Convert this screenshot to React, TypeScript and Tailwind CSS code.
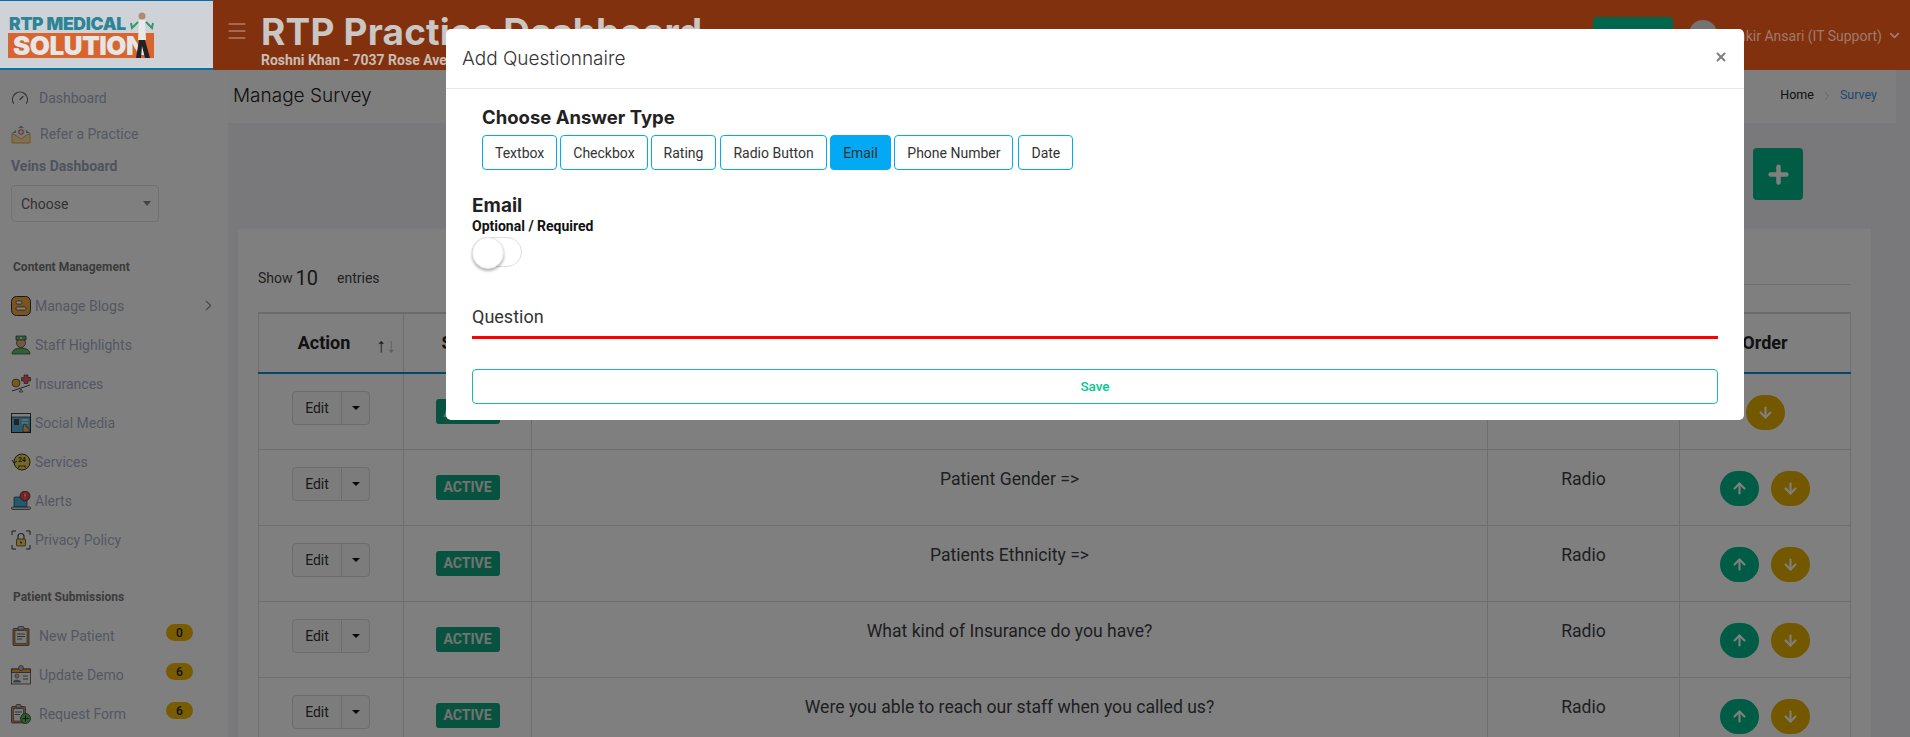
import { ArrowDown, ArrowUp, ChevronDown, ChevronRight, Gauge, Menu, Plus, X } from "lucide-react";
import type { ReactNode } from "react";

const answerTypes = [
  { label: "Textbox", className: "px-[12px] bg-white" },
  { label: "Checkbox", className: "px-[12px] bg-white" },
  { label: "Rating", className: "px-[12px] bg-white" },
  { label: "Radio Button", className: "ml-[1px] px-[12px] bg-white" },
  { label: "Email", className: "px-[12.5px] bg-[#03a9f4]" },
  { label: "Phone Number", className: "px-[12px] bg-white" },
  { label: "Date", className: "ml-[2px] px-[12px] bg-white" },
];

const rows = [
  { question: "Patient Name =>", type: "Text", first: true },
  { question: "Patient Gender =>", type: "Radio" },
  { question: "Patients Ethnicity =>", type: "Radio" },
  { question: "What kind of Insurance do you have?", type: "Radio" },
  { question: "Were you able to reach our staff when you called us?", type: "Radio" },
];

/* small colour icons of the sidebar */
function Svg({ children }: { children: ReactNode }) {
  return (
    <svg viewBox="0 0 20 20" className="w-5 h-5 flex-shrink-0">
      {children}
    </svg>
  );
}

const BlogIcon = () => (
  <Svg>
    <rect x="0.5" y="0.5" width="19" height="19" rx="5" fill="#f0a83c" stroke="#333" />
    <rect x="5" y="5" width="6" height="3" rx="1.5" fill="#fff" stroke="#333" strokeWidth="0.7" />
    <rect x="5" y="11" width="10" height="3" rx="1.5" fill="#fff" stroke="#333" strokeWidth="0.7" />
  </Svg>
);
const StaffIcon = () => (
  <Svg>
    <path d="M1 19c0-4 4-6 9-6s9 2 9 6z" fill="#5cc46a" stroke="#333" strokeWidth="0.7" />
    <circle cx="10" cy="8" r="4.5" fill="#eeb07c" stroke="#333" strokeWidth="0.7" />
    <path d="M5 5V1h10v4z" fill="#5cc46a" stroke="#333" strokeWidth="0.7" />
    <path d="M9 3h2M10 2v2" stroke="#fff" strokeWidth="0.8" />
  </Svg>
);
const InsuranceIcon = () => (
  <Svg>
    <circle cx="5" cy="9" r="4" fill="#e8b93c" stroke="#333" strokeWidth="0.7" />
    <path d="M13 1h4v2.500h2.500v3.500H17v2.500h-4V7h-2.500V3.500H13z" fill="#ee5a5a" stroke="#333" strokeWidth="0.6" />
    <path d="M1 17L19 11" stroke="#333" strokeWidth="0.9" />
    <path d="M8 18l2-3 2 3z" fill="#ddd" stroke="#333" strokeWidth="0.6" />
  </Svg>
);
const SocialIcon = () => (
  <Svg>
    <rect x="0.500" y="0.500" width="19" height="19" fill="#5ab8d8" stroke="#222" />
    <rect x="0.500" y="0.500" width="19" height="3.500" fill="#fff" stroke="#222" strokeWidth="0.7" />
    <rect x="3" y="6" width="5" height="6" fill="#445" />
    <path d="M11 7h6M11 10h6" stroke="#fff" strokeWidth="1" />
    <path d="M12 19v-4l1-4 2 .5v2.500l3 1V19z" fill="#f0b070" stroke="#333" strokeWidth="0.6" />
  </Svg>
);
const ServiceIcon = () => (
  <Svg>
    <circle cx="11" cy="10" r="8" fill="#ecd04a" stroke="#333" />
    <path d="M1 8l2 3 3-2" fill="none" stroke="#333" />
    <path d="M7 14l8 0M7 16l2-2M15 16l-2-2" stroke="#333" strokeWidth="0.8" />
    <text x="11" y="10" fontSize="6.500" fontWeight="700" textAnchor="middle" fontFamily="Roboto, sans-serif" fill="#333">24</text>
  </Svg>
);
const AlertIcon = () => (
  <Svg>
    <rect x="3" y="6" width="13" height="10" rx="1" fill="#3fb4dc" stroke="#333" strokeWidth="0.7" />
    <rect x="0.500" y="16" width="19" height="2.500" rx="1" fill="#ccc" stroke="#333" strokeWidth="0.7" />
    <circle cx="14" cy="5" r="5" fill="#ee4444" stroke="#333" strokeWidth="0.7" />
    <path d="M14 2.500v3M14 6.500v1" stroke="#fff" strokeWidth="1" />
  </Svg>
);
const PrivacyIcon = () => (
  <Svg>
    <path d="M1 5V1h4M15 1h4v4M19 15v4h-4M5 19H1v-4" fill="none" stroke="#222" strokeWidth="0.9" />
    <path d="M7 9V6.500a3 3 0 016 0V9" fill="none" stroke="#444" strokeWidth="1.200" />
    <rect x="5.500" y="9" width="9" height="7" rx="1" fill="#f2d64a" stroke="#333" strokeWidth="0.7" />
    <circle cx="10" cy="12.500" r="1" fill="#333" />
  </Svg>
);
const PatientIcon = () => (
  <Svg>
    <rect x="2" y="2.500" width="16" height="17" rx="1" fill="#d89a52" stroke="#333" strokeWidth="0.7" />
    <rect x="4" y="4.500" width="12" height="13" fill="#f2f2f2" stroke="#333" strokeWidth="0.5" />
    <rect x="7" y="0.500" width="6" height="3.500" rx="1" fill="#bbb" stroke="#333" strokeWidth="0.6" />
    <path d="M6 8h8M6 10.500h8M6 13h5" stroke="#444" strokeWidth="0.8" />
  </Svg>
);
const DemoIcon = () => (
  <Svg>
    <rect x="0.500" y="4" width="19" height="15" fill="#f5f5f5" stroke="#333" strokeWidth="0.7" />
    <rect x="0.500" y="4" width="19" height="3.500" fill="#eda64a" stroke="#333" strokeWidth="0.7" />
    <circle cx="10" cy="3" r="2.500" fill="#bbb" stroke="#333" strokeWidth="0.6" />
    <circle cx="6" cy="11" r="2" fill="#f0b888" stroke="#333" strokeWidth="0.5" />
    <path d="M2.500 17c0-2.500 7-2.500 7 0z" fill="#3fa8d4" stroke="#333" strokeWidth="0.5" />
    <path d="M12 11h5M12 14h5" stroke="#444" strokeWidth="0.8" />
  </Svg>
);
const RequestIcon = () => (
  <Svg>
    <rect x="0.500" y="2.500" width="14" height="16.500" rx="1" fill="#d89a52" stroke="#333" strokeWidth="0.7" />
    <rect x="2.500" y="4.500" width="10" height="12.500" fill="#f2f2f2" stroke="#333" strokeWidth="0.5" />
    <rect x="5" y="0.500" width="5" height="3.500" rx="1" fill="#bbb" stroke="#333" strokeWidth="0.6" />
    <path d="M4 8h7M4 10.500h5" stroke="#444" strokeWidth="0.8" />
    <circle cx="14.500" cy="14.500" r="5" fill="#55c060" stroke="#222" strokeWidth="0.7" />
    <path d="M14.500 11.500v6M11.500 14.500h6" stroke="#222" strokeWidth="0.9" />
  </Svg>
);
const ReferIcon = () => (
  <Svg>
    <path d="M2 9l8-7 8 7" fill="#5ab8c8" stroke="#4a9aa8" strokeWidth="0.8" />
    <rect x="5" y="4" width="10" height="9" fill="#f5f5f5" />
    <circle cx="10" cy="8" r="2.200" fill="none" stroke="#e05a5a" strokeWidth="1.100" />
    <path d="M1 9v10h18V9l-9 6z" fill="#fbe3a8" stroke="#e8a63c" strokeWidth="1" />
  </Svg>
);

function NavItem({ icon, label, badge, more }: { icon: ReactNode; label: string; badge?: string; more?: boolean }) {
  return (
    <div className="h-[39px] flex items-center pl-[11px] pr-[35px] relative">
      {icon}
      <span className={`text-sm text-[#a8afc6] ${badge ? "ml-[8px]" : "ml-[4px]"}`}>{label}</span>
      {badge && (
        <span className="ml-auto w-[27px] h-[17px] rounded-full bg-[#f2b600] text-[#222] text-xs font-medium flex items-center justify-center -translate-y-[3px] mr-0">
          {badge}
        </span>
      )}
      {more && <ChevronRight size={17} strokeWidth={1.5} className="ml-auto -mr-[24px] text-[#8a90a0]" />}
    </div>
  );
}

function Logo() {
  return (
    <div className="w-[213px] h-[70px] bg-[#cfd3d7] border-t border-t-[#0b6ea5] border-b-2 border-b-[#0b6ea5] pt-[13px] pl-[8px] relative flex-shrink-0">
      <p className="font-['Inter',sans-serif] font-black text-[#2d8496] text-[17.5px] leading-[19px] tracking-[-0.3px] ml-[1px] w-[122px] whitespace-nowrap overflow-hidden">
        RTP MEDICAL
      </p>
      <p className="w-[146px] h-[25px] bg-[#d8652f] text-[#e6e6e6] font-['Inter',sans-serif] font-black text-[26px] leading-[25px] tracking-[-0.5px] pl-[5px]">
        SOLUTION
      </p>
      <svg viewBox="0 0 24 48" className="absolute left-[130px] top-[11px] w-[24px] h-[48px]">
        <circle cx="12" cy="4" r="3.500" fill="#b08a70" />
        <path d="M9 8h6l1 20H8z" fill="#e8e8e8" />
        <path d="M8 10L2 16l-1-5M16 10l6 6 1-5" fill="none" stroke="#2f9a70" strokeWidth="2" />
        <path d="M9 28h6l5 18h-5l-3-12-1 12H6z" fill="#222" />
      </svg>
    </div>
  );
}

function Header() {
  return (
    <header className="relative z-50 h-[70px] flex bg-[#82310f]">
      <Logo />
      <Menu size={24} strokeWidth={1} className="ml-[12px] mt-[19px] text-[#c8a48f]" />
      <div className="ml-[12px] pt-[12px]">
        <p className="font-['Inter',sans-serif] font-bold text-[37px] leading-[40px] tracking-[0.2px] text-[#c9c6c3] whitespace-nowrap">
          RTP Practice Dashboard
        </p>
        <p className="mt-[1px] font-['Roboto',sans-serif] font-bold text-sm leading-[14px] text-[#c9bcb4] whitespace-nowrap">
          Roshni Khan - 7037 Rose Avenue
        </p>
      </div>
      <div className="ml-auto flex items-start pr-[8px] pt-[17px]">
        <div className="w-[80px] h-[34px] rounded bg-[#00664c]" />
        <div className="ml-[16px] mt-[3px] w-[28px] h-[28px] rounded-full bg-[#737373]" />
        <span className="ml-[5px] mt-[9px] text-sm font-['Roboto',sans-serif] text-[#a07a6a] whitespace-nowrap">
          Shakir Ansari (IT Support)
        </span>
        <ChevronDown size={15} strokeWidth={3} className="ml-[5px] mt-[11px] text-[#a07a6a]" />
      </div>
    </header>
  );
}

function Sidebar() {
  return (
    <aside className="w-[228px] flex-shrink-0 bg-white pt-[10px]">
      <div className="h-[36px] flex items-center pl-[11px]">
        <Gauge size={18} strokeWidth={1.5} className="text-[#565c68]" />
        <span className="ml-[10px] text-sm text-[#a8afc6]">Dashboard</span>
      </div>
      <div className="h-[36px] flex items-center pl-[11px]">
        <ReferIcon />
        <span className="ml-[9px] text-sm text-[#a8afc6]">Refer a Practice</span>
      </div>
      <p className="pl-[11px] mt-[4px] text-sm leading-[20px] font-bold text-[#a0a7bd]">Veins Dashboard</p>
      <div className="ml-[11px] mt-[9px] w-[148px] h-[37px] border border-[#e2e2e2] rounded flex items-center pl-[9px] pr-[7px] justify-between">
        <span className="text-sm text-[#666]">Choose</span>
        <span className="w-0 h-0 border-x-4 border-x-transparent border-t-[5px] border-t-[#888]" />
      </div>
      <p className="pl-[13px] mt-[37px] text-xs leading-[16px] font-bold text-[#777]">Content Management</p>
      <div className="mt-[11px]">
        <NavItem icon={<BlogIcon />} label="Manage Blogs" more />
        <NavItem icon={<StaffIcon />} label="Staff Highlights" />
        <NavItem icon={<InsuranceIcon />} label="Insurances" />
        <NavItem icon={<SocialIcon />} label="Social Media" />
        <NavItem icon={<ServiceIcon />} label="Services" />
        <NavItem icon={<AlertIcon />} label="Alerts" />
        <NavItem icon={<PrivacyIcon />} label="Privacy Policy" />
      </div>
      <p className="pl-[13px] mt-[30px] text-xs leading-[16px] font-bold text-[#777]">Patient Submissions</p>
      <div className="mt-[11px]">
        <NavItem icon={<PatientIcon />} label="New Patient" badge="0" />
        <NavItem icon={<DemoIcon />} label="Update Demo" badge="6" />
        <NavItem icon={<RequestIcon />} label="Request Form" badge="6" />
      </div>
    </aside>
  );
}

function SurveyTable() {
  return (
    <table className="table-fixed w-[1592px] border-collapse text-[#3c3f44]">
      <colgroup>
        <col className="w-[145px]" />
        <col className="w-[128px]" />
        <col className="w-[956px]" />
        <col className="w-[192px]" />
        <col className="w-[171px]" />
      </colgroup>
      <thead>
        <tr className="h-[60px] border-t-2 border-t-[#d6d6d6] border-b-2 border-b-[#0b8fd0]">
          <th className="border-x border-x-[#dcdcdc] text-lg font-bold text-[#222] relative pr-[14px]">
            Action
            <span className="absolute right-[7px] top-[18px] text-xl leading-[26px] font-normal text-[#333]">
              ↑<span className="text-[#bbb]">↓</span>
            </span>
          </th>
          <th className="border-x border-x-[#dcdcdc] text-lg font-bold text-[#222]">Status</th>
          <th className="border-x border-x-[#dcdcdc] text-lg font-bold text-[#222]">Question</th>
          <th className="border-x border-x-[#dcdcdc] text-lg font-bold text-[#222]">Type</th>
          <th className="border-x border-x-[#dcdcdc] text-lg font-bold text-[#222]">Order</th>
        </tr>
      </thead>
      <tbody>
        {rows.map((row) => (
          <tr key={row.question} className="h-[76px] border-b border-b-[#dcdcdc]">
            <td className="border-x border-x-[#dcdcdc] align-top pt-[17px]">
              <div className="mx-auto w-[78px] h-[34px] border border-[#d8d8d8] bg-[#f8f8f8] rounded flex items-center text-sm text-[#333]">
                <span className="w-[49px] text-center border-r border-r-[#d8d8d8] leading-[32px]">Edit</span>
                <span className="mx-auto w-0 h-0 border-x-4 border-x-transparent border-t-[4px] border-t-[#111]" />
              </div>
            </td>
            <td className="border-x border-x-[#dcdcdc] align-top pt-[25px]">
              <div className="mx-auto w-[64px] h-[25px] rounded-[3px] bg-[#0fa77f] text-[#e4e4e4] text-sm font-bold flex items-center justify-center">
                ACTIVE
              </div>
            </td>
            <td className="border-x border-x-[#dcdcdc] align-top pt-[16px] text-center text-[17.6px] leading-[27px]">
              {row.question}
            </td>
            <td className="border-x border-x-[#dcdcdc] align-top pt-[16px] text-center text-[17.6px] leading-[27px]">
              {row.type}
            </td>
            <td className="border-x border-x-[#dcdcdc] align-top pt-[21px]">
              <div className="flex justify-center gap-[12px]">
                {!row.first && (
                  <span className="w-[39px] h-[35px] rounded-full bg-[#00b88a] text-white flex items-center justify-center">
                    <ArrowUp size={17} strokeWidth={3} />
                  </span>
                )}
                <span className="w-[39px] h-[35px] rounded-full bg-[#e6b000] text-white flex items-center justify-center">
                  <ArrowDown size={17} strokeWidth={3} />
                </span>
              </div>
            </td>
          </tr>
        ))}
      </tbody>
    </table>
  );
}

function Main() {
  return (
    <main className="flex-1 bg-[#f2f3f6]">
      <div className="h-[53px] mr-[14px] bg-[#fdfdfd] flex items-center pl-[5px] pr-[19px]">
        <h1 className="font-['Inter',sans-serif] font-light text-[19px] text-[#222]">Manage Survey</h1>
        <div className="ml-auto flex items-center text-[12.5px] -translate-y-[1px]">
          <span className="text-[#222]">Home</span>
          <ChevronRight size={14} strokeWidth={1} className="mx-[6px] text-[#aaa]" />
          <span className="text-[#3a8ee6]">Survey</span>
        </div>
      </div>
      <div className="h-[106px] flex justify-end pt-[25px] pr-[107px]">
        <button className="w-[50px] h-[52px] rounded bg-[#00b88a] text-white flex items-center justify-center">
          <Plus size={27} strokeWidth={4} />
        </button>
      </div>
      <section className="ml-[10px] mr-[39px] bg-white px-[20px] pt-[36px] h-[600px]">
        <div className="h-[47px] flex items-start relative">
          <span className="text-sm leading-[24px] text-[#444] mt-[1px]">Show</span>
          <span className="ml-[3px] text-xl leading-[24px] text-[#333] mt-[1px]">10</span>
          <span className="ml-[19px] text-sm leading-[24px] text-[#444] mt-[1px]">entries</span>
          <div className="ml-auto w-[240px] h-[20px] border-b border-b-[#dcdcdc]" />
        </div>
        <SurveyTable />
      </section>
    </main>
  );
}

function QuestionModal() {
  return (
    <div className="absolute z-50 left-[446px] top-[29px] w-[1298px] h-[391px] bg-white rounded-[5px] font-['Roboto',sans-serif]">
      <div className="h-[60px] border-b border-b-[#e5e7eb] flex items-center pl-[16px] pr-[16px]">
        <h2 className="font-['Inter',sans-serif] font-light text-[19px] text-[#333] translate-y-[1px]">Add Questionnaire</h2>
        <X size={14} strokeWidth={3.5} className="ml-auto text-[#808080] -translate-y-[2px]" />
      </div>
      <div className="pl-[26px] pr-[26px]">
        <div className="pl-[10px] pt-[15px]">
          <p className="font-['Inter',sans-serif] font-bold text-[18.5px] leading-[26px] text-[#222]">Choose Answer Type</p>
          <div className="flex gap-[3px] mt-[5px]">
            {answerTypes.map((t) => (
              <button key={t.label} className={`h-[35px] rounded border border-[#03a9f4] text-sm text-[#333] ${t.className}`}>
                {t.label}
              </button>
            ))}
          </div>
        </div>
        <p className="mt-[23px] font-['Inter',sans-serif] font-bold text-[19px] leading-[25px] text-[#222]">Email</p>
        <p className="font-bold text-sm leading-[16px] text-[#111]">Optional / Required</p>
        <div className="relative mt-[3px] w-[50px] h-[30px] rounded-full border border-[#dedede] bg-white">
          <span className="absolute -left-px -top-px w-[32px] h-[32px] rounded-full bg-white border border-[#e5e5e5] shadow-[0_2px_3px_rgba(0,0,0,0.3)]" />
        </div>
        <p className="mt-[38px] text-lg leading-[24px] text-[#333]">Question</p>
        <div className="mt-[7px] h-[3px] bg-[#ff0000]" />
        <button className="mt-[30px] w-full h-[35px] rounded border border-[#1abc9c] text-[#00c98f] text-[13.5px] font-medium">
          Save
        </button>
      </div>
    </div>
  );
}

export default function App() {
  return (
    <div className="relative h-screen overflow-hidden font-['Roboto',sans-serif]">
      <Header />
      <div className="flex">
        <Sidebar />
        <Main />
      </div>
      {/* backdrop of the modal, the header sits above it with its own dimmed colours */}
      <div className="absolute inset-0 z-40 bg-black/50" />
      <QuestionModal />
    </div>
  );
}
